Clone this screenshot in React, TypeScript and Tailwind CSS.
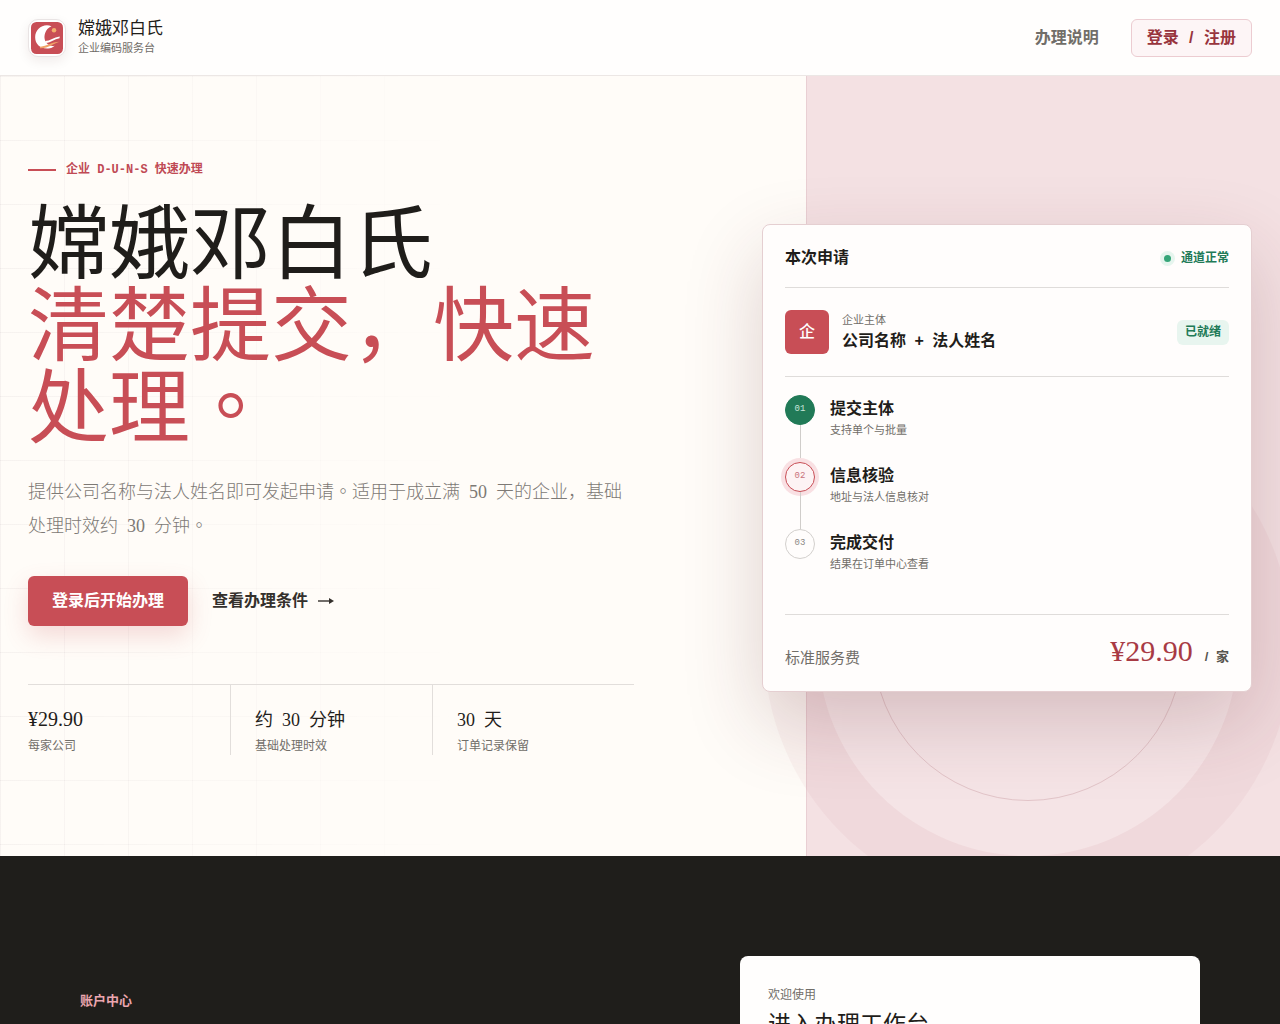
import React from 'react'
import clsx from 'clsx'

const stats = [
  { value: <span className="text-[20px]"><Num>¥29.90</Num></span>, label: '每家公司' },
  { value: <>约 <Num spaced>30</Num> 分钟</>, label: '基础处理时效' },
  { value: <><Num>30</Num><span className="ml-1"> 天</span></>, label: '订单记录保留' },
]

const steps = [
  { no: '01', title: '提交主体', desc: '支持单个与批量', state: 'done' },
  { no: '02', title: '信息核验', desc: '地址与法人信息核对', state: 'active' },
  { no: '03', title: '完成交付', desc: '结果在订单中心查看', state: 'todo' },
]

function Num({ children, spaced }: { children: React.ReactNode; spaced?: boolean }) {
  return <span className={clsx("font-['Liberation_Serif',serif]", spaced && 'mx-1')}>{children}</span>
}

// full stop that sits in the middle of its cell
function Stop() {
  return <span lang="zh-Hant" className="font-['Liberation_Sans','Noto_Sans_CJK_TC',sans-serif]">。</span>
}

function Logo() {
  return (
    <span className="flex size-[38px] items-center justify-center rounded-[10px] border border-[#e9e4e4] bg-white shadow-[0_4px_12px_rgba(60,30,30,0.08)]">
      <svg viewBox="0 0 100 100" className="size-8 shrink-0" aria-hidden="true">
        <rect width="100" height="100" rx="17" fill="#c84e56" />
        <path d="M64 13C38 3 13 22 13 48c0 23 18 37 41 35 8-1 15-4 20-9-9 2-17 0-22-5-10-9-12-22-8-34 3-10 10-18 20-22z" fill="#fff" />
        <path d="M44 59c16 0 27-11 46-14l-1 6c-16 2-26 14-43 15z" fill="#fff" />
        <path d="M28 77c20 1 34-15 62-15-22 6-34 21-62 20z" fill="#f0a268" />
        <circle cx="72" cy="26" r="7" fill="#f3ae6d" />
      </svg>
    </span>
  )
}

function Header() {
  return (
    <header className="flex h-[76px] items-center justify-between border-b border-[#ece7e5] bg-[#fffefd] px-7">
      <a href="#" className="flex items-center gap-3">
        <Logo />
        <span className="flex flex-col">
          <span className="text-[17px] leading-5 text-[#1f1d1a]">嫦娥邓白氏</span>
          <span className="text-[11px] leading-[18px] text-[#6f6c67]">企业编码服务台</span>
        </span>
      </a>
      <nav className="flex items-center gap-8">
        <a href="#guide" className="text-[16px] font-bold text-[#716e69]">办理说明</a>
        <button className="h-[38px] rounded-md border border-[#ecccd1] bg-[#fdf5f6] px-[15px] text-[16px] font-bold text-[#98343d]">
          登录 <span className="mx-1.5">/</span> 注册
        </button>
      </nav>
    </header>
  )
}

function ApplyCard() {
  return (
    <div className="rounded-lg border border-[#e5cfd1] bg-[#fffdfc] px-[22px] shadow-[0_30px_80px_rgba(90,35,42,0.2)]">
      <div className="flex h-[63px] items-center justify-between border-b border-[#dfdcda] pt-1">
        <h2 className="text-[16px] font-bold text-[#1f1d1a]">本次申请</h2>
        <span className="flex items-center gap-2.5 text-[12px] font-bold text-[#217a57]">
          <span className="size-[7px] rounded-full bg-[#35a578] ring-4 ring-[#e6f5ee]" />
          通道正常
        </span>
      </div>

      <div className="flex h-[89px] items-center border-b border-[#dfdcda]">
        <span className="flex size-11 items-center justify-center rounded-md bg-[#c84e56] text-[16px] font-medium text-white">企</span>
        <div className="ml-[13px] flex flex-col">
          <span className="text-[11px] leading-[18px] text-[#716e69]">企业主体</span>
          <strong className="text-[16px] leading-6 text-[#1f1d1a]">公司名称 <span className="mx-1">+</span> 法人姓名</strong>
        </div>
        <span className="ml-auto rounded-md bg-[#e8f5ef] px-2 py-1 text-[12px] leading-[17px] font-bold text-[#217a57]">已就绪</span>
      </div>

      <ol className="border-b border-[#dfdcda] py-[18px]">
        {steps.map((step, i) => (
          <li key={step.no} className="flex h-[67px] gap-[15px]">
            <div className="flex flex-col items-center">
              <span
                className={clsx(
                  "flex size-[30px] shrink-0 items-center justify-center rounded-full border font-['Liberation_Mono',monospace] text-[9px]",
                  step.state === 'done' && 'border-[#217a57] bg-[#217a57] text-[#c9e6d9]',
                  step.state === 'active' && 'border-[#c84e56] bg-[#fdf3f4] text-[#c8727a] ring-4 ring-[#f9e0e3]',
                  step.state === 'todo' && 'border-[#d3d0cd] bg-[#fffdfc] text-[#8b8884]',
                )}
              >
                {step.no}
              </span>
              {i < steps.length - 1 && <span className="w-px grow bg-[#d0cdca]" />}
            </div>
            <div className="pt-[3px]">
              <h3 className="text-[16px] leading-[22px] font-bold text-[#1f1d1a]">{step.title}</h3>
              <p className="mt-px text-[11px] leading-[18px] text-[#716e69]">{step.desc}</p>
            </div>
          </li>
        ))}
      </ol>

      <div className="flex h-[76px] items-center justify-between">
        <span className="pt-2.5 text-[15px] text-[#716e69]">标准服务费</span>
        <span className="flex items-baseline gap-3 pb-1">
          <strong className="text-[30px] leading-8 font-normal text-[#a83a44]"><Num>¥29.90</Num></strong>
          <span className="text-[13px] font-bold text-[#57544f]">/ <span className="ml-1">家</span></span>
        </span>
      </div>
    </div>
  )
}

function Hero() {
  return (
    <section className="relative isolate overflow-hidden bg-[#fffcf8]">
      {/* backdrop: faint grid, side panel, rings */}
      <div className="absolute inset-0 -z-10 bg-[linear-gradient(to_right,rgba(60,30,60,0.045)_1px,transparent_1px),linear-gradient(to_bottom,rgba(60,30,60,0.045)_1px,transparent_1px)] mask-[linear-gradient(to_right,black,transparent_36%)] bg-size-[64px_64px]" />
      <div className="absolute inset-y-0 right-0 -z-10 w-[37%] border-l border-[#e9cfd3] bg-[#f4e1e3]" />
      <div className="absolute right-[42px] bottom-0 -z-10 flex size-[420px] items-center justify-center rounded-full bg-white/10 shadow-[0_0_0_54px_rgba(170,80,95,0.05)]">
        <div className="size-[310px] rounded-full border border-[#e2c4c8]" />
      </div>

      <div className="grid min-h-[780px] grid-cols-[minmax(0,1fr)_490px] items-center gap-x-32 px-7 pb-4">
        <div>
          <p className="flex items-center gap-2.5 font-['Liberation_Mono','Noto_Sans_CJK_SC',monospace] text-[12px] leading-[18px] font-bold text-[#c04a55]">
            <span className="h-0.5 w-7 bg-[#c84e56]" />
            企业 D-U-N-S 快速办理
          </p>
          <h1 className="mt-6 text-[81px] leading-[82px] font-normal text-[#1f1d1a]">
            嫦娥邓白氏
            <span className="block text-[#c84e56]">清楚提交，快速处理<Stop /></span>
          </h1>
          <p className="mt-[26px] text-[18px] leading-[34px] font-light text-[#7d7975]">
            提供公司名称与法人姓名即可发起申请<Stop />适用于成立满 <Num spaced>50</Num> 天的企业，基础处理时效约 <Num spaced>30</Num> 分钟<Stop />
          </p>
          <div className="mt-[33px] flex items-center gap-6">
            <button className="h-[50px] rounded-md bg-[#c84e56] px-6 text-[16px] font-bold text-white shadow-[0_10px_24px_rgba(200,78,86,0.2)]">
              登录后开始办理
            </button>
            <a href="#guide" className="flex items-center gap-2.5 text-[16px] font-bold text-[#34302c]">
              查看办理条件
              <svg viewBox="0 0 16 10" className="w-4" aria-hidden="true">
                <path d="M0 5h12" stroke="currentColor" strokeWidth="1.4" />
                <path d="M11 2l5 3-5 3z" fill="currentColor" />
              </svg>
            </a>
          </div>
          <dl className="mt-[58px] grid grid-cols-3 border-t border-[#e2dedb]">
            {stats.map((s, i) => (
              <div key={s.label} className={clsx('flex flex-col-reverse pt-5', i > 0 && 'border-l border-[#e2dedb] pl-6')}>
                <dt className="mt-[3px] text-[12px] leading-[18px] text-[#716e69]">{s.label}</dt>
                <dd className="text-[18px] leading-7 text-[#1f1d1a]">{s.value}</dd>
              </div>
            ))}
          </dl>
        </div>
        <ApplyCard />
      </div>
    </section>
  )
}

function Account() {
  return (
    <section className="bg-[#1f1e1b] px-20 py-[100px]">
      <div className="mx-auto flex max-w-[1120px] items-start justify-between">
        <p className="pt-9 text-[13px] leading-[18px] font-bold text-[#eba6af]">账户中心</p>
        <div className="w-[460px] rounded-lg bg-[#fffefd] px-7 pt-[30px] pb-7">
          <p className="text-[12px] leading-[18px] text-[#716e69]">欢迎使用</p>
          <h2 className="mt-1 text-[23px] leading-8 text-[#1f1d1a]">进入办理工作台</h2>
        </div>
      </div>
    </section>
  )
}

export default function App() {
  return (
    <div lang="zh-CN" className="min-h-screen bg-[#1f1e1b] font-['Liberation_Sans','Noto_Sans_CJK_SC',sans-serif]">
      <Header />
      <main>
        <Hero />
        <Account />
      </main>
    </div>
  )
}
